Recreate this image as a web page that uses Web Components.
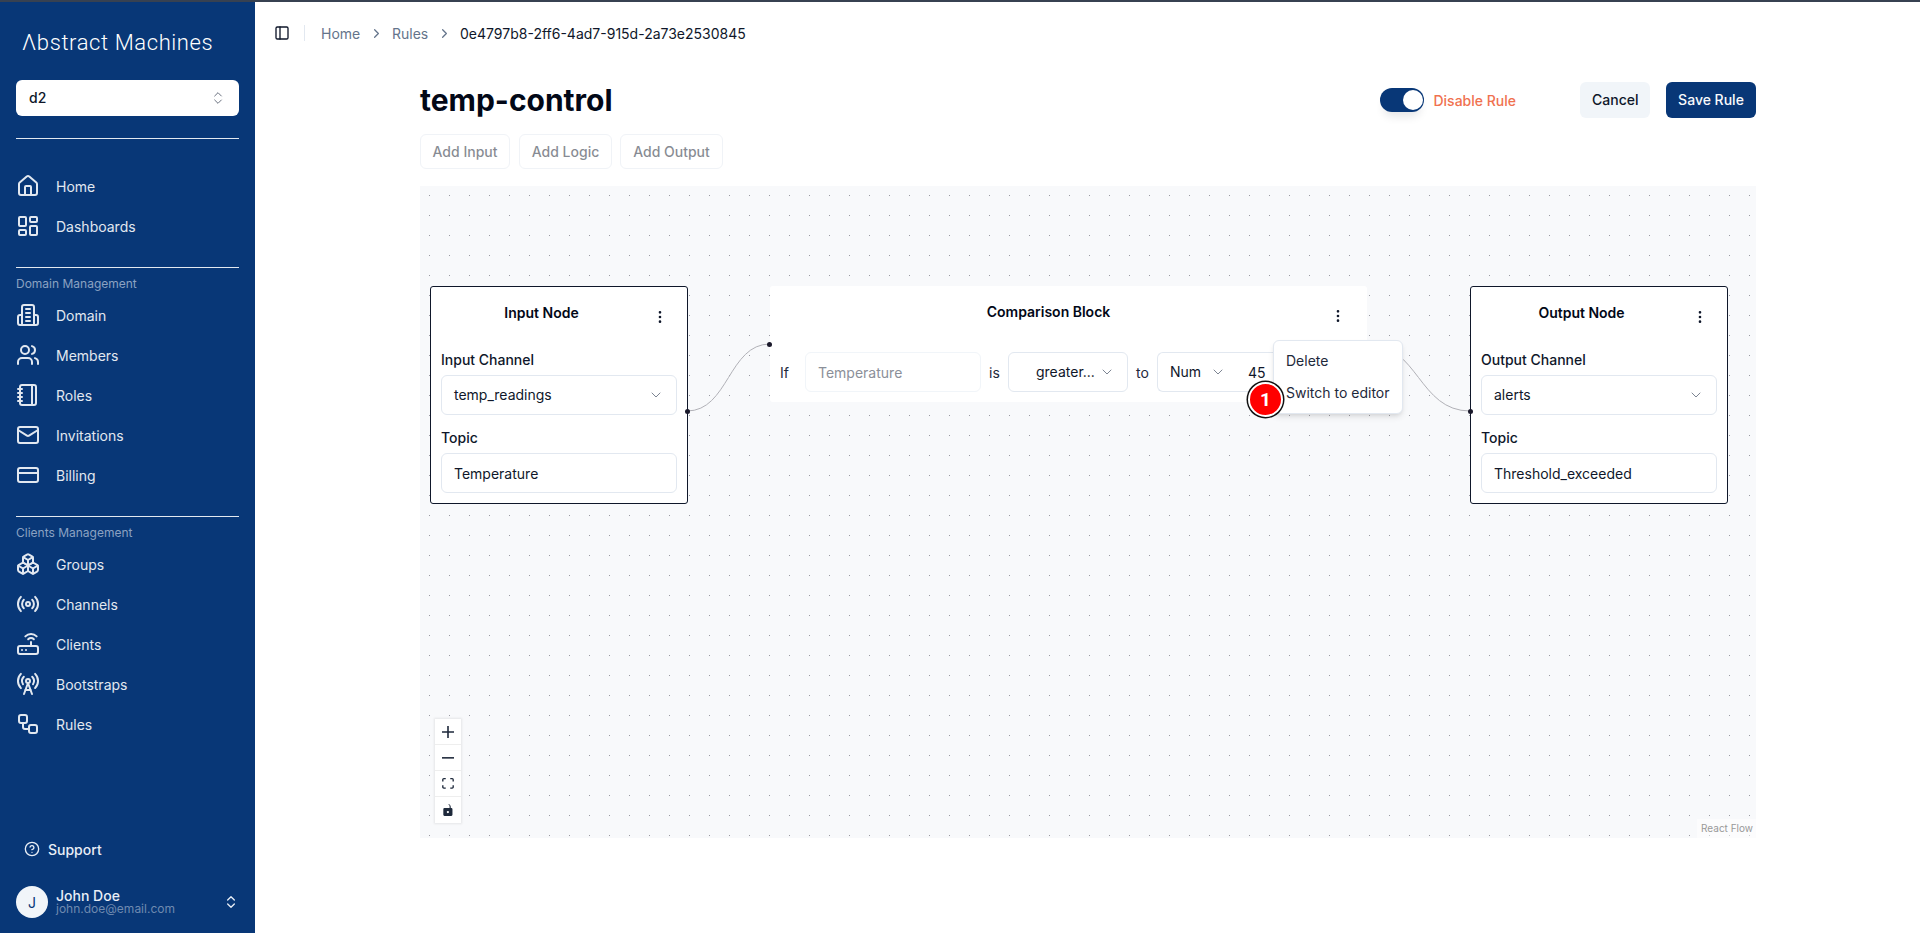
<!DOCTYPE html>
<html lang="en">
<head>
<meta charset="utf-8">
<title>temp-control</title>
<style>
  html, body { height: 100%; }
  body {
    margin: 0;
    font-family: Inter, "Liberation Sans", sans-serif;
    font-size: 14px;
    color: #0f172a;
    background: #fff;
    overflow: hidden;
  }
  #shell { display: flex; flex-direction: column; height: 933px; }
  #topline { height: 2px; flex: none; background: #374151; }
  #body { display: flex; flex: 1; min-height: 0; }
</style>
</head>
<body>
<div id="shell">
  <div id="topline"></div>
  <div id="body">
    <app-sidebar>
      <nav-item icon="home">Home</nav-item>
      <nav-item icon="dashboard">Dashboards</nav-item>
      <nav-group title="Domain Management">
        <nav-item icon="domain">Domain</nav-item>
        <nav-item icon="members">Members</nav-item>
        <nav-item icon="roles">Roles</nav-item>
        <nav-item icon="mail">Invitations</nav-item>
        <nav-item icon="card">Billing</nav-item>
      </nav-group>
      <nav-group title="Clients Management">
        <nav-item icon="boxes">Groups</nav-item>
        <nav-item icon="radio">Channels</nav-item>
        <nav-item icon="router">Clients</nav-item>
        <nav-item icon="tower">Bootstraps</nav-item>
        <nav-item icon="workflow">Rules</nav-item>
      </nav-group>
    </app-sidebar>
    <main-view>
      <bread-crumbs></bread-crumbs>
      <rule-page>
        <flow-canvas>
          <flow-node title="Input Node" style="left:10px;top:100px;width:258px" handles="right">
            <field-box label="Input Channel" value="temp_readings" select></field-box>
            <field-box label="Topic" value="Temperature"></field-box>
          </flow-node>
          <comparison-node style="left:350px;top:100px;width:597px"></comparison-node>
          <flow-node title="Output Node" style="left:1050px;top:100px;width:258px" handles="left">
            <field-box label="Output Channel" value="alerts" select></field-box>
            <field-box label="Topic" value="Threshold_exceeded"></field-box>
          </flow-node>
          <context-menu style="left:853px;top:154px"></context-menu>
          <step-badge style="left:828px;top:195.500px">1</step-badge>
        </flow-canvas>
      </rule-page>
    </main-view>
  </div>
</div>

<script>
const ICONS = {
  home: '<path d="M15 21v-8a1 1 0 0 0-1-1h-4a1 1 0 0 0-1 1v8"/><path d="M3 10a2 2 0 0 1 .709-1.528l7-5.999a2 2 0 0 1 2.582 0l7 5.999A2 2 0 0 1 21 10v9a2 2 0 0 1-2 2H5a2 2 0 0 1-2-2z"/>',
  dashboard: '<rect width="7" height="9" x="3" y="3" rx="1"/><rect width="7" height="5" x="14" y="3" rx="1"/><rect width="7" height="9" x="14" y="12" rx="1"/><rect width="7" height="5" x="3" y="16" rx="1"/>',
  domain: '<path d="M6 22V4a2 2 0 0 1 2-2h8a2 2 0 0 1 2 2v18Z"/><path d="M6 12H4a2 2 0 0 0-2 2v6a2 2 0 0 0 2 2h2"/><path d="M18 12h2a2 2 0 0 1 2 2v6a2 2 0 0 1-2 2h-2"/><path d="M10 6h4"/><path d="M10 10h4"/><path d="M10 14h4"/><path d="M10 18h4"/>',
  members: '<path d="M16 21v-2a4 4 0 0 0-4-4H6a4 4 0 0 0-4 4v2"/><circle cx="9" cy="7" r="4"/><path d="M22 21v-2a4 4 0 0 0-3-3.87"/><path d="M16 3.13a4 4 0 0 1 0 7.75"/>',
  roles: '<path d="M2 6h4"/><path d="M2 10h4"/><path d="M2 14h4"/><path d="M2 18h4"/><rect width="16" height="20" x="4" y="2" rx="2"/><path d="M16 2v20"/>',
  mail: '<rect width="20" height="16" x="2" y="4" rx="2"/><path d="m22 7-8.97 5.7a1.94 1.94 0 0 1-2.06 0L2 7"/>',
  card: '<rect width="20" height="14" x="2" y="5" rx="2"/><line x1="2" x2="22" y1="10" y2="10"/>',
  boxes: '<path d="M2.97 12.92A2 2 0 0 0 2 14.63v3.24a2 2 0 0 0 .97 1.71l3 1.8a2 2 0 0 0 2.06 0L12 19v-5.5l-5-3-4.03 2.42Z"/><path d="m7 16.5-4.74-2.85"/><path d="m7 16.5 5-3"/><path d="M7 16.5v5.17"/><path d="M12 13.5V19l3.97 2.38a2 2 0 0 0 2.06 0l3-1.8a2 2 0 0 0 .97-1.71v-3.24a2 2 0 0 0-.97-1.71L17 10.5l-5 3Z"/><path d="m17 16.5-5-3"/><path d="m17 16.5 4.74-2.85"/><path d="M17 16.5v5.17"/><path d="M7.97 4.42A2 2 0 0 0 7 6.13v4.37l5 3 5-3V6.13a2 2 0 0 0-.97-1.71l-3-1.8a2 2 0 0 0-2.06 0l-3 1.8Z"/><path d="M12 8 7.26 5.15"/><path d="m12 8 4.74-2.85"/><path d="M12 13.5V8"/>',
  radio: '<path d="M4.9 19.1C1 15.2 1 8.8 4.9 4.9"/><path d="M7.8 16.2c-2.3-2.3-2.3-6.1 0-8.5"/><circle cx="12" cy="12" r="2"/><path d="M16.2 7.8c2.3 2.3 2.3 6.1 0 8.5"/><path d="M19.1 4.9C23 8.8 23 15.1 19.1 19"/>',
  router: '<rect width="20" height="8" x="2" y="14" rx="2"/><path d="M6.01 18H6"/><path d="M10.01 18H10"/><path d="M15 10v4"/><path d="M17.84 7.17a4 4 0 0 0-5.66 0"/><path d="M20.66 4.34a8 8 0 0 0-11.31 0"/>',
  tower: '<path d="M4.9 16.1C1 12.2 1 5.8 4.9 1.9"/><path d="M7.8 4.7a6.14 6.14 0 0 0-.8 7.5"/><circle cx="12" cy="9" r="2"/><path d="M16.2 4.8c2 2 2.26 5.11.8 7.47"/><path d="M19.1 1.9a9.96 9.96 0 0 1 0 14.1"/><path d="M9.5 18h5"/><path d="m8 22 4-11 4 11"/>',
  workflow: '<rect width="8" height="8" x="3" y="3" rx="2"/><path d="M7 11v4a2 2 0 0 0 2 2h4"/><rect width="8" height="8" x="13" y="13" rx="2"/>',
  help: '<circle cx="12" cy="12" r="10"/><path d="M9.09 9a3 3 0 0 1 5.83 1c0 2-3 3-3 3"/><path d="M12 17h.01"/>',
  updown: '<path d="m7 15 5 5 5-5"/><path d="m7 9 5-5 5 5"/>',
  panel: '<rect width="18" height="18" x="3" y="3" rx="2"/><path d="M9 3v18"/>',
  kebab: '<circle cx="12" cy="12" r="1"/><circle cx="12" cy="5" r="1"/><circle cx="12" cy="19" r="1"/>',
  down: '<path d="m6 9 6 6 6-6"/>',
  right: '<path d="m9 18 6-6-6-6"/>'
};

function icon(name, size, width = 2) {
  return `<svg xmlns="http://www.w3.org/2000/svg" width="${size}" height="${size}" viewBox="0 0 24 24" fill="none" stroke="currentColor" stroke-width="${width}" stroke-linecap="round" stroke-linejoin="round" style="display:block;flex:none">${ICONS[name]}</svg>`;
}

// small base so every element just returns its markup
class ShadowBase extends HTMLElement {
  connectedCallback() {
    if (this.shadowRoot) return;
    this.attachShadow({ mode: 'open' });
    this.shadowRoot.innerHTML = this.markup();
  }
}

class NavItem extends ShadowBase {
  markup() {
    return `
      <style>
        :host { display: flex; align-items: center; gap: 16px; height: 40px; color: #e2e8f0; font-size: 14px; }
      </style>
      ${icon(this.getAttribute('icon'), 24)}
      <span><slot></slot></span>
    `;
  }
}

class NavGroup extends ShadowBase {
  markup() {
    return `
      <style>
        :host { display: block; }
        .rule { height: 1px; background: #e2e8f0; margin-top: 21px; }
        .title { font-size: 12px; line-height: 16px; color: #8ba2c2; margin: 8px 0 3px; }
      </style>
      <div class="rule"></div>
      <div class="title">${this.getAttribute('title')}</div>
      <slot></slot>
    `;
  }
}

class AppSidebar extends ShadowBase {
  markup() {
    return `
      <style>
        :host { display: flex; flex-direction: column; width: 255px; flex: none; box-sizing: border-box; padding: 0 16px 15px; background: #083777; }
        .logo { height: 78px; display: flex; align-items: center; padding: 2px 0 0 6px; font-family: Roboto, "Liberation Sans", sans-serif; font-weight: 300; font-size: 22px; letter-spacing: 0.6px; color: #fff; box-sizing: border-box; }
        .domain { display: flex; align-items: center; justify-content: space-between; height: 36px; padding: 0 13px 0 13px; background: #fff; border-radius: 6px; color: #0f172a; font-size: 14px; font-weight: 500; }
        .domain span { padding-bottom: 1px; }
        .domain svg { color: #6b7280; }
        .rule { height: 1px; background: #e2e8f0; margin: 22px 0 27px; }
        .spacer { flex: 1; }
        .support { display: flex; align-items: center; gap: 8px; height: 40px; padding-left: 8px; color: #e8eef6; font-weight: 500; margin-bottom: 17px; }
        .user { display: flex; align-items: center; height: 32px; gap: 8px; color: #e8eef6; }
        .avatar { width: 32px; height: 32px; border-radius: 50%; background: #f1f5f9; color: #083777; display: flex; align-items: center; justify-content: center; font-size: 14px; }
        .who { flex: 1; margin-left: 0; }
        .name { font-weight: 500; font-size: 14px; line-height: 14px; }
        .email { font-size: 12px; line-height: 12px; color: #6f8ab0; margin-top: 0; }
      </style>
      <div class="logo">Λbstract Machines</div>
      <div class="domain"><span>d2</span>${icon('updown', 16, 1.5)}</div>
      <div class="rule"></div>
      <slot></slot>
      <div class="spacer"></div>
      <div class="support">${icon('help', 16)}<span>Support</span></div>
      <div class="user">
        <div class="avatar">J</div>
        <div class="who"><div class="name">John Doe</div><div class="email">john.doe@email.com</div></div>
        ${icon('updown', 16)}
      </div>
    `;
  }
}

class MainView extends ShadowBase {
  markup() {
    return `
      <style>
        :host { display: flex; flex-direction: column; flex: 1; min-width: 0; }
      </style>
      <slot></slot>
    `;
  }
}

class BreadCrumbs extends ShadowBase {
  markup() {
    return `
      <style>
        :host { display: flex; align-items: center; height: 62px; flex: none; padding-left: 19px; font-size: 14px; color: #64748b; }
        .panel { color: #0f172a; }
        .sep { width: 1px; height: 16px; background: #e2e8f0; margin: 0 16px 0 14px; }
        nav { display: flex; align-items: center; gap: 8.400px; }
        .now { color: #0f172a; }
      </style>
      <span class="panel">${icon('panel', 16)}</span>
      <span class="sep"></span>
      <nav>
        <span>Home</span>${icon('right', 15)}
        <span>Rules</span>${icon('right', 15)}
        <span class="now">0e4797b8-2ff6-4ad7-915d-2a73e2530845</span>
      </nav>
    `;
  }
}

class RulePage extends ShadowBase {
  markup() {
    return `
      <style>
        :host { display: block; width: 1336px; margin-left: 165px; padding-top: 18px; }
        .head { display: flex; align-items: center; height: 36px; }
        h1 { margin: 0; flex: 1; font-size: 30px; line-height: 36px; font-weight: 700; color: #020817; }
        .switch { display: flex; align-items: center; gap: 9px; margin-right: 64px; color: #f0714f; font-weight: 500; }
        .track { position: relative; width: 44px; height: 24px; border-radius: 12px; background: #083777; box-shadow: 0 8px 10px -4px rgba(15,23,42,.12); }
        .knob { position: absolute; right: 1px; top: 2px; width: 20px; height: 20px; border-radius: 50%; background: #fff; }
        .actions { display: flex; gap: 16px; }
        button { font: inherit; font-weight: 500; line-height: 20px; height: 36px; padding: 0 12px 1px; border: 0; border-radius: 6px; }
        .cancel { width: 70px; background: #f1f5f9; color: #0f172a; }
        .save { width: 90px; background: #083777; color: #f8fafc; }
        .tools { display: flex; gap: 9px; margin: 16px 0 17px; }
        .tools button { height: 35px; padding: 0; background: #fff; border: 1px solid #e2e8f0; color: #0f172a; opacity: .5; }
      </style>
      <div class="head">
        <h1>temp-control</h1>
        <div class="switch"><span class="track"><span class="knob"></span></span><span>Disable Rule</span></div>
        <div class="actions"><button class="cancel">Cancel</button><button class="save">Save Rule</button></div>
      </div>
      <div class="tools">
        <button style="width:90px">Add Input</button>
        <button style="width:93px;margin-right:-1px">Add Logic</button>
        <button style="width:103px">Add Output</button>
      </div>
      <slot></slot>
    `;
  }
}

class FlowCanvas extends ShadowBase {
  markup() {
    return `
      <style>
        :host {
          display: block; position: relative; height: 652px; overflow: hidden;
          background-color: #f8f9fb;
          background-image: radial-gradient(circle at .5px .5px, #9a9aa2 .6px, transparent .75px);
          background-size: 20px 20px;
          background-position: 9px 9px;
        }
        svg.edges { position: absolute; inset: 0; width: 100%; height: 100%; }
        .controls { position: absolute; left: 15px; top: 533px; width: 26px; background: #fff; box-shadow: 0 0 2px 1px rgba(0,0,0,.08); }
        .controls div { height: 26px; box-sizing: border-box; display: flex; align-items: center; justify-content: center; border-bottom: 1px solid #eee; }
        .controls div:last-child { border-bottom: 0; }
        .controls svg { display: block; max-width: 12px; max-height: 12px; fill: #1e293b; }
        .credit { position: absolute; right: 0; bottom: 0; padding: 2px 3px 2px 4px; font-size: 10px; line-height: 15px; color: #999; background: rgba(255,255,255,.5); }
      </style>
      <svg class="edges" fill="none" stroke="#b1b1b7" stroke-width="1">
        <path d="M267 225 C308.500 225 308.500 158 350 158"/>
        <path d="M947 158 C998.500 158 998.500 225 1050 225"/>
      </svg>
      <slot></slot>
      <div class="controls">
        <div><svg viewBox="0 0 32 32" width="12" height="12"><path d="M32 18.133H18.133V32h-4.266V18.133H0v-4.266h13.867V0h4.266v13.867H32z"/></svg></div>
        <div><svg viewBox="0 0 32 5" width="12" height="2"><path d="M0 0h32v4.200H0z"/></svg></div>
        <div><svg viewBox="0 0 32 30" width="12" height="11"><path d="M3.692 4.630c0-.530.400-.938.939-.938h5.215V0H4.708C2.130 0 0 2.054 0 4.630v5.216h3.692V4.631zM27.354 0h-5.200v3.692h5.170c.530 0 .984.400.984.939v5.215H32V4.631A4.624 4.624 0 0027.354 0zm.954 24.830c0 .532-.400.940-.939.940h-5.215v3.768h5.215c2.577 0 4.631-2.130 4.631-4.707v-5.139h-3.692v5.139zm-23.677.940c-.531 0-.939-.400-.939-.940v-5.138H0v5.139c0 2.577 2.130 4.707 4.708 4.707h5.138V25.770H4.631z"/></svg></div>
        <div><svg viewBox="0 0 25 32" width="10" height="12"><path d="M21.333 10.667H19.810V7.619C19.810 3.429 16.380 0 12.190 0c2.600 1.100 4.570 3.300 4.570 6v4.667H3.048A3.056 3.056 0 000 13.714v15.238A3.056 3.056 0 003.048 32h18.285a3.056 3.056 0 003.048-3.048V13.714a3.056 3.056 0 00-3.048-3.047zM12.190 24.533a3.056 3.056 0 01-3.047-3.047 3.056 3.056 0 013.047-3.048 3.056 3.056 0 013.048 3.048 3.056 3.056 0 01-3.048 3.047z"/></svg></div>
      </div>
      <div class="credit">React Flow</div>
    `;
  }
}

const HANDLE_CSS = `
  .handle { position: absolute; width: 5px; height: 5px; border-radius: 50%; background: #1a192b; }
`;

class FlowNode extends ShadowBase {
  markup() {
    const side = this.getAttribute('handles');
    return `
      <style>
        :host { display: block; position: absolute; box-sizing: border-box; height: 218px; padding: 12px 10px 9px; background: #fff; border: 1px solid #0f172a; border-radius: 3px; }
        ${HANDLE_CSS}
        .handle { top: 122px; ${side}: -3px; }
        header { display: flex; align-items: flex-start; height: 36px; }
        .title { flex: 1; text-align: center; font-weight: 600; line-height: 20px; margin-top: 4px; color: #020817; }
        .menu { width: 36px; height: 36px; margin-right: -1px; display: flex; align-items: center; justify-content: center; color: #0f172a; }
      </style>
      <span class="handle"></span>
      <header>
        <div class="title">${this.getAttribute('title')}</div>
        <div class="menu">${icon('kebab', 16)}</div>
      </header>
      <slot></slot>
    `;
  }
}

class FieldBox extends ShadowBase {
  markup() {
    const isSelect = this.hasAttribute('select');
    const chevron = isSelect ? icon('down', 16, 1.5) : '';
    return `
      <style>
        :host { display: block; padding-top: 15px; }
        :host(:last-child) { padding-top: 13px; }
        label { display: block; font-weight: 500; line-height: 20px; margin-bottom: 5px; color: #0f172a; }
        .box { display: flex; align-items: center; justify-content: space-between; box-sizing: border-box; height: 40px; padding: 0 12px; border: 1px solid #e2e8f0; border-radius: 6px; color: #0f172a; }
        .box svg { color: #7d8593; }
      </style>
      <label>${this.getAttribute('label')}</label>
      <div class="box"><span style="padding-bottom:${isSelect ? 1 : 0}px">${this.getAttribute('value')}</span>${chevron}</div>
    `;
  }
}

class ComparisonNode extends ShadowBase {
  markup() {
    return `
      <style>
        :host { display: block; position: absolute; box-sizing: border-box; height: 116px; padding: 12px 11px 10px 10px; background: #fff; border-radius: 3px; }
        ${HANDLE_CSS}
        .handle { top: 56px; }
        header { display: flex; align-items: flex-start; height: 36px; }
        .title { flex: 1; text-align: center; font-weight: 600; line-height: 20px; color: #020817; margin-top: 4px; padding-right: 3px; }
        .menu { width: 36px; height: 36px; display: flex; align-items: center; justify-content: center; color: #0f172a; }
        .row { display: flex; align-items: center; margin-top: 18px; height: 40px; }
        .word { color: #1e293b; }
        .box { display: flex; align-items: center; box-sizing: border-box; height: 40px; border: 1px solid #e2e8f0; border-radius: 6px; color: #0f172a; }
        .box span { padding-bottom: 1px; }
        .box svg { color: #7d8593; }
      </style>
      <span class="handle" style="left:-3px"></span>
      <span class="handle" style="right:-3px"></span>
      <header>
        <div class="title">Comparison Block</div>
        <div class="menu">${icon('kebab', 16)}</div>
      </header>
      <div class="row">
        <span class="word" style="width:25px">If</span>
        <div class="box" style="width:176px;padding-left:12px;border-color:#f1f5f9;color:#8b8f99">Temperature</div>
        <span class="word" style="width:27px;padding-left:8px;box-sizing:border-box">is</span>
        <div class="box" style="width:120px;padding-left:27px;gap:4px"><span>greater...</span>${icon('down', 16, 1.5)}</div>
        <span class="word" style="width:29px;padding-left:8px;box-sizing:border-box">to</span>
        <div class="box" style="width:81px;padding-left:12px;gap:9px;border-radius:6px 0 0 6px;border-right:0"><span>Num</span>${icon('down', 16, 1.5)}</div>
        <div class="box" style="width:114px;padding-left:10px;border-left:0;border-radius:0 6px 6px 0">45</div>
      </div>
    `;
  }
}

class ContextMenu extends ShadowBase {
  markup() {
    return `
      <style>
        :host { display: block; position: absolute; box-sizing: border-box; width: 130px; height: 74px; padding: 4px; background: #fff; border: 1px solid #e2e8f0; border-radius: 6px; box-shadow: 0 4px 6px -1px rgba(0,0,0,.1), 0 2px 4px -2px rgba(0,0,0,.1); color: #1e293b; }
        div { height: 32px; line-height: 32px; padding: 0 8px; white-space: nowrap; }
      </style>
      <div>Delete</div>
      <div>Switch to editor</div>
    `;
  }
}

class StepBadge extends ShadowBase {
  markup() {
    return `
      <style>
        :host { display: flex; position: absolute; box-sizing: border-box; width: 35px; height: 35px; align-items: center; justify-content: center; border-radius: 50%; background: #f00; border: 2px solid #fff; box-shadow: 0 0 0 1.500px #111; color: #fff; font-size: 19px; font-weight: 700; font-family: Roboto, Inter, sans-serif; }
      </style>
      <slot></slot>
    `;
  }
}

customElements.define('nav-item', NavItem);
customElements.define('nav-group', NavGroup);
customElements.define('app-sidebar', AppSidebar);
customElements.define('main-view', MainView);
customElements.define('bread-crumbs', BreadCrumbs);
customElements.define('rule-page', RulePage);
customElements.define('flow-canvas', FlowCanvas);
customElements.define('flow-node', FlowNode);
customElements.define('field-box', FieldBox);
customElements.define('comparison-node', ComparisonNode);
customElements.define('context-menu', ContextMenu);
customElements.define('step-badge', StepBadge);
</script>
</body>
</html>
